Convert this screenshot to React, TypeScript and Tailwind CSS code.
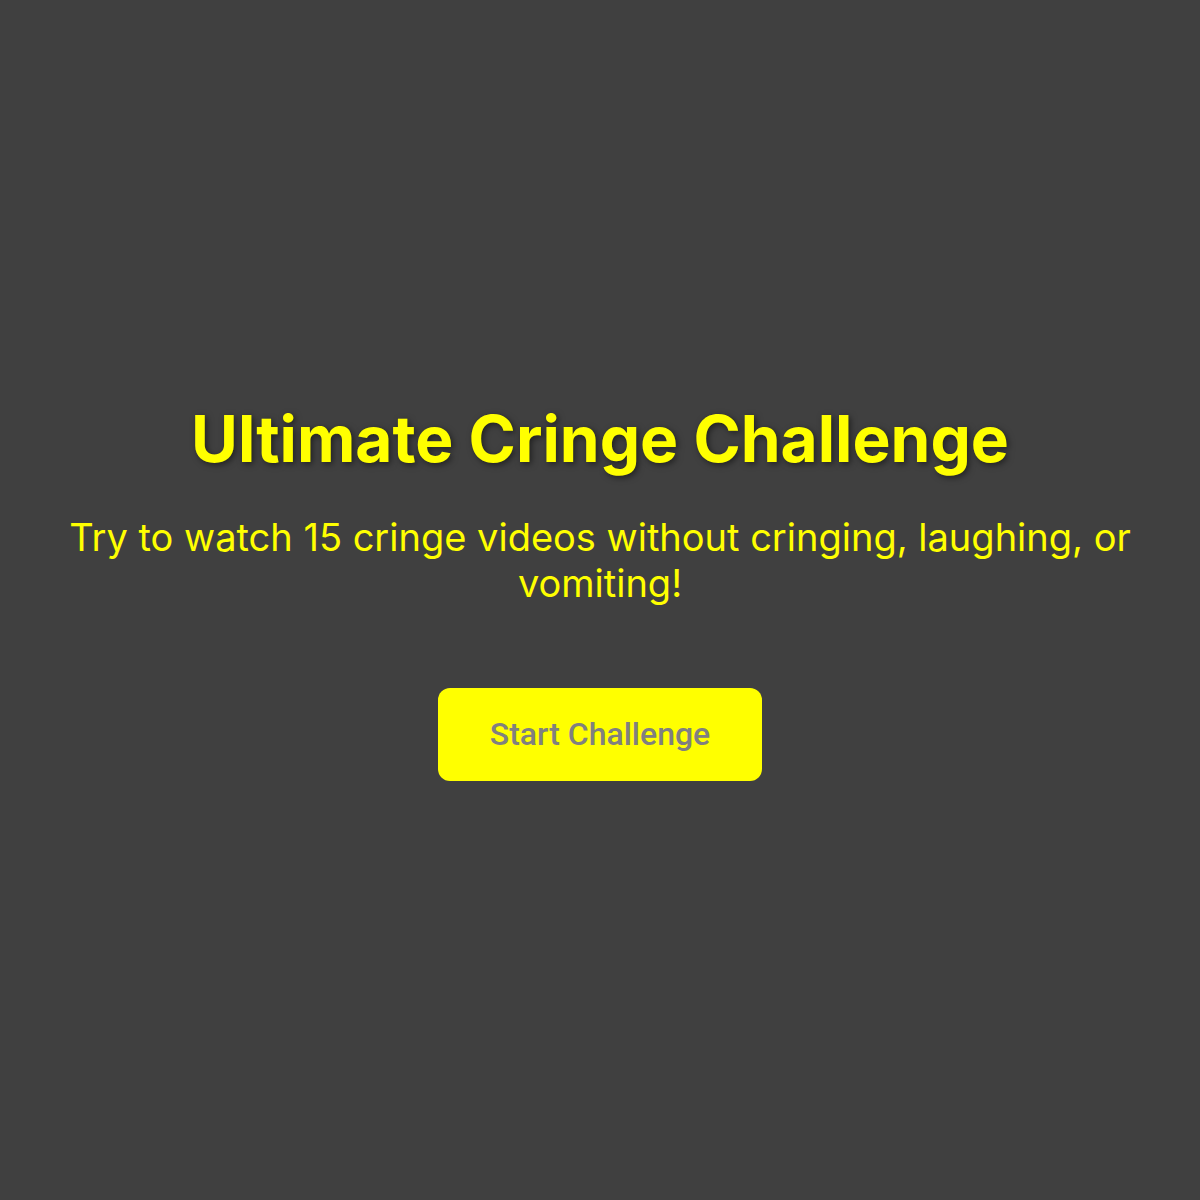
export default function App() {
  return (
    <div className="flex min-h-screen flex-col items-center justify-center bg-[#404040] px-8 pb-[18px] text-center font-['Inter',sans-serif]">
      <h1 className="text-[64px] font-bold leading-[1.2] text-[#ffff00] [text-shadow:2px_2px_6px_rgba(0,0,0,0.5)]">
        Ultimate Cringe Challenge
      </h1>
      <p className="mt-9 text-[38px] leading-[46px] text-[#ffff00]">
        Try to watch 15 cringe videos without cringing, laughing, or vomiting!
      </p>
      <button className="mt-[82px] h-[93px] w-[324px] rounded-xl bg-[#ffff00] font-['Roboto',sans-serif] text-[32px] font-medium text-[#808080]">
        Start Challenge
      </button>
    </div>
  );
}
